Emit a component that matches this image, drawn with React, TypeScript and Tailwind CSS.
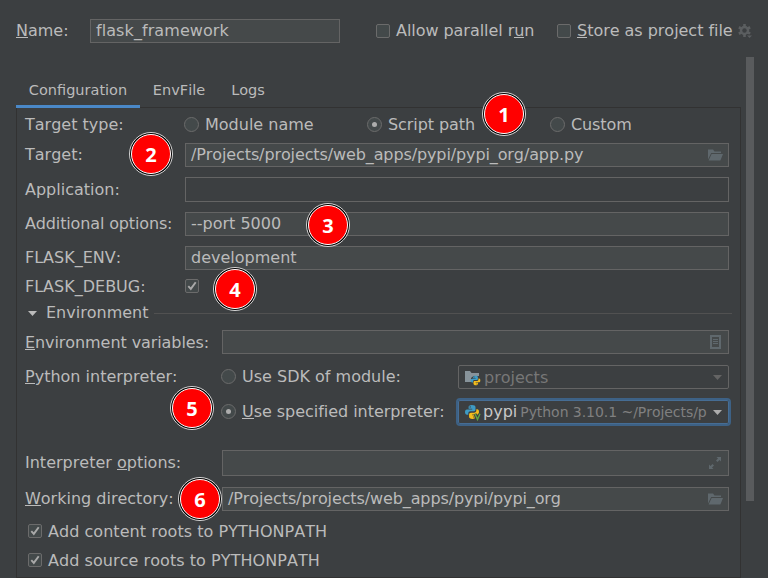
import React from 'react';

type Kids = { children?: React.ReactNode; className?: string };

function U({ children }: Kids) {
  return <span className="inline-block h-[17px] border-b border-[#bbbbbb] leading-[19px]">{children}</span>;
}

function Row({ children, className = '' }: Kids) {
  return <div className={`flex shrink-0 items-center ${className}`}>{children}</div>;
}

function Label({ children, className = '' }: Kids) {
  return <div className={`shrink-0 ${className}`}>{children}</div>;
}

function Field({ children, className = 'bg-[#45494a]' }: Kids) {
  return (
    <div className={`flex h-full min-w-0 flex-1 items-center justify-between border border-[#646464] pr-[5px] pl-[5px] ${className}`}>
      {children}
    </div>
  );
}

function Check({ on = false }: { on?: boolean }) {
  return (
    <span className="flex size-[14px] shrink-0 items-center justify-center rounded-[2px] border border-[#6b6b6b] bg-[#43494a]">
      {on && (
        <svg width="12" height="12" viewBox="0 0 12 12" fill="none" stroke="#a9a9a9" strokeWidth="1.9">
          <path d="M2.3 6.2 4.8 8.9 9.7 2.2" />
        </svg>
      )}
    </span>
  );
}

function Radio({ on = false }: { on?: boolean }) {
  return (
    <span className="flex size-[15px] shrink-0 items-center justify-center rounded-full border border-[#6b6b6b] bg-[#43494a]">
      {on && <span className="size-[5px] rounded-full bg-[#adadad]" />}
    </span>
  );
}

function Folder() {
  return (
    <svg width="16" height="16" viewBox="0 0 16 16" fill="#5f686d">
      <path d="M1 12.5V2.5h5l1.500 2H14V6H4.2z" />
      <path d="M4.6 7H16l-2.6 6.5H1.6z" />
    </svg>
  );
}

function Python({ size }: { size: number }) {
  return (
    <svg width={size} height={size} viewBox="0 0 16 16">
      <path
        fill="#3e9bc4"
        d="M7.9 1C5.3 1 4.6 2 4.6 3.2v1.6h3.6v.6H3C1.600 5.400 1 6.500 1 8.100s.7 2.700 2 2.700h1.300V9.200c0-1.200 1-2 2.200-2h3.200c1 0 1.800-.8 1.800-1.800V3.200C11.500 1.800 10.300 1 7.900 1zM6.200 2.200a.7.7 0 1 1 0 1.400.7.7 0 0 1 0-1.400z"
      />
      <path
        fill="#f4bd1c"
        d="M12.300 5.200v1.400c0 1.300-1 2.200-2.200 2.200H6.900c-1 0-1.800.8-1.800 1.800v2.200c0 1.300 1.200 2.200 3.300 2.200s3.300-.9 3.300-2.200v-1.600H8.200v-.6h5c1.300 0 1.800-1.100 1.800-2.700s-.6-2.700-1.800-2.700zM10 12.300a.7.7 0 1 1 0 1.400.7.7 0 0 1 0-1.400z"
      />
    </svg>
  );
}

function ModuleIcon() {
  return (
    <span className="relative size-[16px] shrink-0">
      <svg className="absolute inset-0" width="16" height="16" viewBox="0 0 16 16" fill="#87939a">
        <path d="M1 13V2h5l1.500 2H15v3H9.500L7 9v4z" />
      </svg>
      <span className="absolute top-[6px] left-[6px]">
        <Python size={11} />
      </span>
    </span>
  );
}

function VenvIcon() {
  return (
    <span className="relative size-[16px] shrink-0">
      <Python size={16} />
      <svg className="absolute top-[9px] left-[10px]" width="7" height="8" viewBox="0 0 7 8" fill="none">
        <path d="M1 .8 3.500 6.500 6 .8" stroke="#3c3f41" strokeWidth="3" />
        <path d="M1 .8 3.500 6.500 6 .8" stroke="#62a543" strokeWidth="1.400" />
      </svg>
    </span>
  );
}

function Arrow({ className = '' }: Kids) {
  return (
    <svg className={`shrink-0 ${className}`} width="9" height="5" viewBox="0 0 9 5" fill="currentColor">
      <path d="M0 0h9L4.500 5z" />
    </svg>
  );
}

function Gear() {
  return (
    <svg width="16" height="16" viewBox="0 0 16 16">
      <g fill="#5b5e60">
        <circle cx="6.500" cy="7.500" r="4.700" />
        <path d="M5.200 1h2.600v13H5.200z" />
        <path d="M5.200 1h2.600v13H5.200z" transform="rotate(60 6.500 7.500)" />
        <path d="M5.200 1h2.600v13H5.200z" transform="rotate(120 6.500 7.500)" />
      </g>
      <circle cx="6.500" cy="7.500" r="2.200" fill="#3c3f41" />
      <path d="M8 11.500h7.500V16H11z" fill="#3c3f41" />
      <path d="M9 12.500h5L11.500 15z" fill="#5b5e60" />
    </svg>
  );
}

const badges = [
  { n: 1, x: 504, y: 114 },
  { n: 2, x: 151, y: 154 },
  { n: 3, x: 328, y: 225 },
  { n: 4, x: 235, y: 289 },
  { n: 5, x: 192, y: 408 },
  { n: 6, x: 200, y: 499 },
];

function Badge({ n, x, y }: { n: number; x: number; y: number }) {
  return (
    <div
      className="absolute size-[44px] rounded-full border border-[#d8d8d8] bg-black p-px"
      style={{ left: x - 22, top: y - 22 }}
    >
      <div className="flex size-full items-center justify-center rounded-full border border-white bg-[#ff0000] pt-px font-['Noto_Sans',sans-serif] text-[20px] font-bold text-white">
        {n}
      </div>
    </div>
  );
}

export default function App() {
  return (
    <div className="relative h-[578px] w-[768px] overflow-hidden bg-[#3c3f41] font-['DejaVu_Sans',sans-serif] text-[16px] leading-[20px] whitespace-nowrap text-[#bbbbbb] [font-kerning:none]">
      <Row className="h-[62px] pl-4">
        <Label className="w-[74px]"><U>N</U>ame:</Label>
        <div className="h-[24px] w-[250px] tracking-[0.08px]"><Field>flask_framework</Field></div>
        <div className="ml-9 flex w-[181px] items-center gap-[6px]">
          <Check />
          <span className="tracking-[-0.05px]">Allow parallel r<U>u</U>n</span>
        </div>
        <div className="flex items-center gap-[6px]">
          <Check />
          <span className="w-[157px] tracking-[-0.03px]"><U>S</U>tore as project file</span>
        </div>
        <div className="ml-[4px]"><Gear /></div>
      </Row>

      <div className="relative z-10 flex h-[46px] items-end pl-4 text-[14.500px]">
        <div className="flex h-[35px] w-[124px] items-center justify-center border-b-3 border-[#4a88c7] pt-px">Configuration</div>
        <div className="flex h-[35px] w-[78px] items-center justify-center border-b-3 border-transparent pt-px">EnvFile</div>
        <div className="flex h-[35px] w-[60px] items-center justify-center border-b-3 border-transparent pt-px">Logs</div>
      </div>

      <div className="flex">
        <div className="-mt-px ml-4 flex h-[471px] w-[725px] flex-col border border-[#323232] pr-[11px] pl-2">
          <Row className="h-[33px]">
            <Label className="w-[159px]">Target type:</Label>
            <div className="flex w-[183px] items-center gap-[6px]"><Radio />Module name</div>
            <div className="flex w-[183px] items-center gap-[6px] tracking-[-0.08px]"><Radio on />Script path</div>
            <div className="flex items-center gap-[6px] tracking-[-0.1px]"><Radio />Custom</div>
          </Row>
          <Row className="mt-[2px] h-[24px]">
            <Label className="w-40">Target:</Label>
            <Field><span className="tracking-[-0.11px]">/Projects/projects/web_apps/pypi/pypi_org/app.py</span><Folder /></Field>
          </Row>
          <Row className="mt-[10px] h-[25px]">
            <Label className="w-40">Application:</Label>
            <Field className="bg-[#3c3f41]" />
          </Row>
          <Row className="mt-[10px] h-[24px]">
            <Label className="w-40 tracking-[-0.14px]">Additional options:</Label>
            <Field>--port 5000</Field>
          </Row>
          <Row className="mt-[10px] h-[24px]">
            <Label className="w-40">FLASK_ENV:</Label>
            <Field>development</Field>
          </Row>
          <Row className="mt-[4px] h-[24px]">
            <Label className="w-40 pt-[2px]">FLASK_DEBUG:</Label>
            <Check on />
          </Row>
          <Row className="-mr-[3px] h-[30px] pl-[3px]">
            <Arrow />
            <span className="ml-[9px]">Environment</span>
            <span className="ml-[5px] h-px flex-1 bg-[#515151]" />
          </Row>
          <Row className="mt-[2px] h-[24px]">
            <Label className="w-[197px] pt-px tracking-[-0.08px]"><U>E</U>nvironment variables:</Label>
            <Field>
              <span />
              <svg width="16" height="16" viewBox="0 0 16 16" fill="none" stroke="#5f686d">
                <path d="M4 2h9v12H4z" strokeWidth="2" />
                <path d="M6 5.500h5M6 7.500h5M6 9.500h5" />
              </svg>
            </Field>
          </Row>
          <Row className="mt-[11px] h-[24px]">
            <Label className="w-[196px]"><U>P</U>ython interpreter:</Label>
            <div className="flex w-[237px] items-center gap-[6px]"><span className="-mt-px flex"><Radio /></span>Use SDK of module:</div>
            <div className="flex h-full flex-1 items-center rounded-[2px] border border-[#646464] pr-[6px] pl-[5px] text-[#777777]">
              <ModuleIcon />
              <span className="ml-1 flex-1 pt-px">projects</span>
              <Arrow className="text-[#646464]" />
            </div>
          </Row>
          <Row className="mt-[9px] -mr-[2px] h-[28px]">
            <Label className="w-[196px]" />
            <div className="flex w-[235px] items-center gap-[6px]"><span className="-mt-px flex"><Radio on /></span><span className="tracking-[-0.04px]"><U>U</U>se specified interpreter:</span></div>
            <div className="flex h-full min-w-0 flex-1 items-center rounded-[4px] border-2 border-[#3d6185] pr-[7px] pl-[6px] ring-1 ring-[#466d94] ring-inset">
              <VenvIcon />
              <span className="ml-[3px] text-[#c8c8c8]">pypi</span>
              <span className="ml-[3px] min-w-0 flex-1 text-[14px] tracking-[-0.05px] text-[#808080]">Python 3.10.1 ~/Projects/p</span>
              <Arrow className="text-[#adadad]" />
            </div>
          </Row>
          <Row className="mt-[24px] h-[26px]">
            <Label className="w-[197px]">Interpreter <U>o</U>ptions:</Label>
            <Field>
              <span />
              <svg width="16" height="16" viewBox="0 0 16 16" fill="#5f686d">
                <path d="M9.500 2H14v4.500L12.500 5 10.500 7 9 5.500l2-2zM2 9.500 3.500 11l2-2L7 10.500l-2 2L6.500 14H2z" />
              </svg>
            </Field>
          </Row>
          <Row className="mt-[11px] h-[24px]">
            <Label className="w-[197px]"><U>W</U>orking directory:</Label>
            <Field><span className="tracking-[-0.11px]">/Projects/projects/web_apps/pypi/pypi_org</span><Folder /></Field>
          </Row>
          <Row className="mt-[6px] h-[29px] gap-[6px] pl-[3px] tracking-[0.04px]"><span className="-mt-px flex"><Check on /></span>Add content roots to PYTHONPATH</Row>
          <Row className="h-[29px] gap-[6px] pl-[3px] tracking-[0.06px]"><span className="-mt-px flex"><Check on /></span>Add source roots to PYTHONPATH</Row>
        </div>
        <div className="-mt-[51px] ml-[5px] h-[444px] w-2 bg-[#595b5d]" />
      </div>

      {badges.map((b) => <Badge key={b.n} {...b} />)}
    </div>
  );
}
